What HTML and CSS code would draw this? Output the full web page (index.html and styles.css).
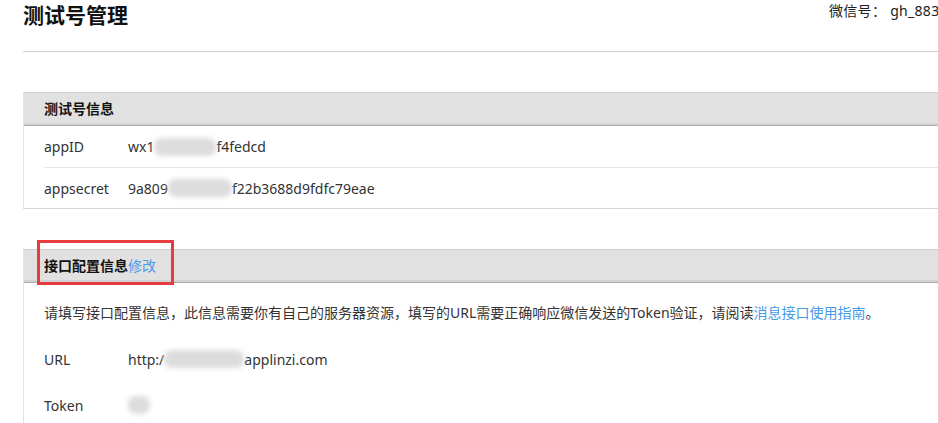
FILE: index.html
```html
<!DOCTYPE html>
<html lang="zh-CN">
<head>
    <meta charset="UTF-8">
    <title>测试号管理</title>
    <link rel="stylesheet" href="styles.css">
</head>
<body>
    <div id="page">
        <div class="topbar">
            <h1>测试号管理</h1>
            <div class="wxid">微信号： gh_883</div>
        </div>

        <div class="panel">
            <div class="panel-head">测试号信息</div>
            <div class="rows">
                <div class="row">
                    <span class="label">appID</span>
                    <span class="value">wx1<span class="mask" style="width: 62px"></span>f4fedcd</span>
                </div>
                <div class="row">
                    <span class="label">appsecret</span>
                    <span class="value">9a809<span class="mask" style="width: 64px"></span>f22b3688d9fdfc79eae</span>
                </div>
            </div>
        </div>

        <div class="panel">
            <div class="panel-head">
                接口配置信息<a href="#">修改</a>
                <span class="mark"></span>
            </div>
            <div class="panel-body">
                <p class="desc">请填写接口配置信息，此信息需要你有自己的服务器资源，填写的URL需要正确响应微信发送的Token验证，请阅读<a href="#">消息接口使用指南</a>。</p>
                <div class="field">
                    <span class="label">URL</span>
                    <span class="value">http:/<span class="mask" style="width: 80px"></span>applinzi.com</span>
                </div>
                <div class="field">
                    <span class="label">Token</span>
                    <span class="value"><span class="mask" style="width: 22px"></span></span>
                </div>
            </div>
        </div>
    </div>
</body>
</html>
```

FILE: styles.css
```css
* {
    box-sizing: border-box;
}

html, body {
    overflow: hidden;
}

body {
    margin: 0;
    background-color: #fff;
    color: #333;
    font-family: "Noto Sans", "Noto Sans CJK SC", sans-serif;
    font-size: 14px;
}

a {
    color: #459ae9;
    text-decoration: none;
}

#page {
    width: 1040px;
    padding-left: 23px;
}

.topbar {
    display: grid;
    grid-template-columns: 806px auto;
    align-items: start;
    height: 52px;
    border-bottom: 1px solid #d2d2d2;
}

.topbar h1 {
    margin: 0;
    font-size: 21px;
    line-height: 28px;
    color: #111;
    font-family: "Noto Sans CJK SC", sans-serif;
    font-weight: bold;
}

.wxid {
    line-height: 22px;
    color: #222;
    white-space: nowrap;
    letter-spacing: 0.3px;
}

.panel {
    margin-top: 40px;
    border-top: 1px solid #cfcfcf;
    border-left: 1px solid #e2e2e2;
    border-bottom: 1px solid #d6d6d6;
}

.panel:last-child {
    border-bottom: none;
}

.panel-head {
    position: relative;
    height: 33px;
    padding-left: 20px;
    line-height: 31px;
    background-color: #e1e1e1;
    border-bottom: 1px solid #a9a9a9;
    box-shadow: inset 0 -4px 0 -2px #d3d3d3;
    font-weight: bold;
    color: #111;
}

.panel-head a {
    font-weight: normal;
}

.mark {
    position: absolute;
    left: 13px;
    top: -10px;
    width: 137px;
    height: 45px;
    border: 3px solid #e63c3f;
}

.rows {
    margin-left: 20px;
}

.row {
    display: flex;
    align-items: center;
    height: 41px;
}

.row + .row {
    border-top: 1px solid #e6e6e6;
}

.label {
    width: 84px;
    flex-shrink: 0;
}

.value {
    display: flex;
    align-items: center;
    white-space: nowrap;
}

.mask {
    display: inline-block;
    height: 18px;
    background-color: #dcdcdc;
    border-radius: 8px;
    filter: blur(2.5px);
}

.panel-body {
    padding: 20px 20px 10px;
}

.desc {
    margin: 0 0 13px;
    line-height: 20px;
}

.field {
    display: flex;
    align-items: center;
    height: 46px;
}
```
